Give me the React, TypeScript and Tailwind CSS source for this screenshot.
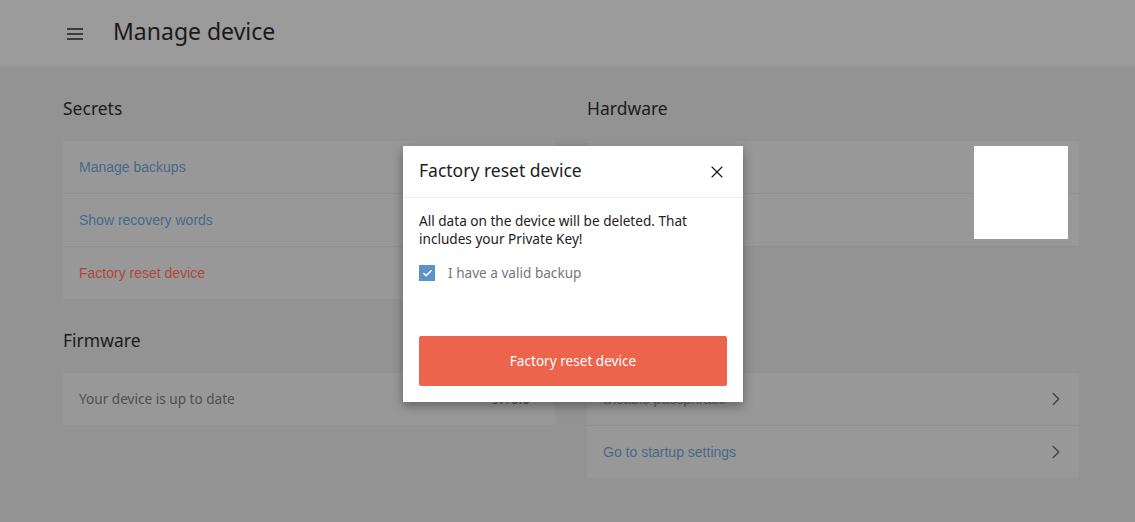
import React, { useState } from 'react';
import { X, ChevronRight, Check } from 'lucide-react';

const ubuntu = { fontFamily: '"Noto Sans", "Open Sans", sans-serif' };
const arial = { fontFamily: '"Liberation Sans", Arial, sans-serif' };

const Row: React.FC<{ label?: string; tone?: 'link' | 'danger' | 'muted'; right?: React.ReactNode; chevron?: boolean }> = ({ label, tone = 'link', right, chevron }) => {
  const color = tone === 'danger' ? 'text-[#b0473b]' : tone === 'muted' ? 'text-[#4f4f4f]' : 'text-[#48688a]';
  return (
    <div className="h-[53px] last:h-[52px] flex items-center justify-between px-4 border-b border-[#8f8f8f] last:border-b-0">
      <span className={tone === 'muted' ? `text-[13.6px] ${color}` : `text-sm ${color}`} style={tone === 'muted' ? ubuntu : arial}>{label}</span>
      {right}
      {chevron && <ChevronRight size={22} strokeWidth={1.4} className="text-[#3e3e3e] -mr-[4px]" />}
    </div>
  );
};

const Section: React.FC<{ title: string; children: React.ReactNode }> = ({ title, children }) => (
  <section>
    <h2 className="text-[17.5px] text-[#1c1c1c] h-[26px] leading-[26px] mb-[20px]" style={ubuntu}>{title}</h2>
    <div className="bg-[#989898]">{children}</div>
  </section>
);

export default function App() {
  const [checked, setChecked] = useState(true);

  return (
    <div className="min-h-[522px] bg-[#939393] relative overflow-hidden" style={ubuntu}>
      {/* Header */}
      <header className="h-[67px] bg-[#9b9b9b] flex items-center pl-[67px]">
        <div className="flex flex-col gap-[3px] w-4">
          <span className="h-[2px] bg-[#3d3d3d]" />
          <span className="h-[2px] bg-[#3d3d3d]" />
          <span className="h-[2px] bg-[#3d3d3d]" />
        </div>
        <h1 className="ml-[30px] text-[23px] text-[#1a1a1a] leading-none -mt-[5px]">Manage device</h1>
      </header>

      {/* Content */}
      <main className="pl-[63px] pt-[28px] grid grid-cols-[492px_492px] gap-x-8 gap-y-[28px]">
        <Section title="Secrets">
          <Row label="Manage backups" />
          <Row label="Show recovery words" />
          <Row label="Factory reset device" tone="danger" />
        </Section>
        <Section title="Hardware">
          <div className="relative">
            <Row />
            <Row />
            <div className="absolute right-[11px] top-[5px] w-[94px] h-[93px] bg-white" />
          </div>
        </Section>
        <Section title="Firmware">
          <Row label="Your device is up to date" tone="muted" right={<span className="text-[13.6px] text-[#4f4f4f] mr-[9px]">9.10.0</span>} />
        </Section>
        <Section title="Advanced">
          <Row label="Disable passphrase" chevron />
          <Row label="Go to startup settings" chevron />
        </Section>
      </main>

      {/* Dialog */}
      <div className="absolute inset-0 flex items-start justify-center pt-[146px] pl-[11px]">
        <div className="w-[340px] h-[256px] bg-white shadow-[0_4px_10px_rgba(0,0,0,0.35)] flex flex-col">
          <div className="h-[52px] flex items-center justify-between pl-4 pr-4 border-b border-[#ececec]">
            <h3 className="text-[17.5px] text-[#1d1d1d] -mt-[2px]">Factory reset device</h3>
            <X size={20} strokeWidth={1.3} className="text-[#111]" />
          </div>
          <div className="px-4 pt-[14px] flex-1 flex flex-col">
            <p className="text-[13.6px] leading-[18px] text-[#222]">
              All data on the device will be deleted. That includes your Private Key!
            </p>
            <label className="mt-[15px] flex items-center gap-[13px] cursor-pointer" onClick={() => setChecked(c => !c)}>
              <span className={`w-4 h-4 flex items-center justify-center ${checked ? 'bg-[#5b93c7]' : 'border border-[#999]'}`}>
                {checked && <Check size={11} strokeWidth={3.5} className="text-white" />}
              </span>
              <span className="text-[13.6px] text-[#777]">I have a valid backup</span>
            </label>
            <button className="mt-auto mb-[16px] h-[50px] w-full rounded-[2px] bg-[#ed644d] text-white text-[13.6px]">
              Factory reset device
            </button>
          </div>
        </div>
      </div>
    </div>
  );
}
